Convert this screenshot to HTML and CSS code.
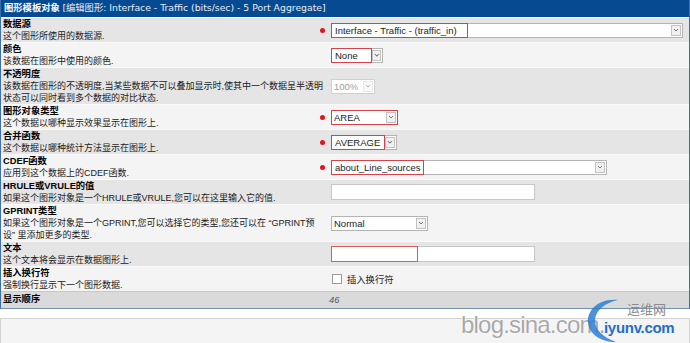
FILE: index.html
```html
<!DOCTYPE html>
<html lang="zh-CN">
<head>
<meta charset="utf-8">
<title>图形模板对象</title>
<link rel="stylesheet" href="styles.css">
</head>
<body>
<div class="panel">
  <div class="head"><b>图形模板对象</b> <span class="sub">[编辑图形: Interface - Traffic (bits/sec) - 5 Port Aggregate]</span></div>

  <div class="row gray">
    <div class="label"><div class="title">数据源</div><div class="desc">这个图形所使用的数据源.</div></div>
    <div class="field"><span class="dot"></span><span class="sel w-ds"><span class="val err w-ds-v">Interface - Traffic - (traffic_in)</span><span class="arrow"></span></span></div>
  </div>

  <div class="row light">
    <div class="label"><div class="title">颜色</div><div class="desc">该数据在图形中使用的颜色.</div></div>
    <div class="field"><span class="sel w-color"><span class="val err w-color-v">None</span><span class="arrow"></span></span></div>
  </div>

  <div class="row gray">
    <div class="label"><div class="title">不透明度</div><div class="desc">该数据在图形的不透明度,当某些数据不可以叠加显示时,使其中一个数据呈半透明<br>状态可以同时看到多个数据的对比状态.</div></div>
    <div class="field"><span class="sel w-op disabled"><span class="val">100%</span><span class="arrow"></span></span></div>
  </div>

  <div class="row light">
    <div class="label"><div class="title">图形对象类型</div><div class="desc">这个数据以哪种显示效果显示在图形上.</div></div>
    <div class="field"><span class="dot"></span><span class="sel w-area all-err"><span class="val">AREA</span><span class="arrow"></span></span></div>
  </div>

  <div class="row gray">
    <div class="label"><div class="title">合并函数</div><div class="desc">这个数据以哪种统计方法显示在图形上.</div></div>
    <div class="field"><span class="dot"></span><span class="sel w-avg"><span class="val err w-avg-v">AVERAGE</span><span class="arrow"></span></span></div>
  </div>

  <div class="row light">
    <div class="label"><div class="title">CDEF函数</div><div class="desc">应用到这个数据上的CDEF函数.</div></div>
    <div class="field"><span class="dot"></span><span class="sel w-cdef"><span class="val err w-cdef-v">about_Line_sources</span><span class="arrow"></span></span></div>
  </div>

  <div class="row gray">
    <div class="label"><div class="title">HRULE或VRULE的值</div><div class="desc">如果这个图形对象是一个HRULE或VRULE,您可以在这里输入它的值.</div></div>
    <div class="field"><span class="inp w-text"></span></div>
  </div>

  <div class="row light">
    <div class="label"><div class="title">GPRINT类型</div><div class="desc">如果这个图形对象是一个GPRINT,您可以选择它的类型,您还可以在 “GPRINT预<br>设” 里添加更多的类型.</div></div>
    <div class="field"><span class="sel w-gp"><span class="val">Normal</span><span class="arrow"></span></span></div>
  </div>

  <div class="row gray">
    <div class="label"><div class="title">文本</div><div class="desc">这个文本将会显示在数据图形上.</div></div>
    <div class="field"><span class="inp w-text"><span class="inp-err"></span></span></div>
  </div>

  <div class="row light">
    <div class="label"><div class="title">插入换行符</div><div class="desc">强制换行显示下一个图形数据.</div></div>
    <div class="field"><span class="check"></span><span class="check-label">插入换行符</span></div>
  </div>

  <div class="row order">
    <div class="label"><div class="title">显示顺序</div></div>
    <div class="field"><span class="num">46</span></div>
  </div>
</div>

<div class="footer"></div>

<div class="wm">
  <span class="wm-blog">blog.sina.com.</span>
  <svg class="wm-arc" width="40" height="46" viewBox="0 0 40 46"><path d="M32 3 C 13 1, 1 13, 2 25 C 3 37, 14 45, 30 45 C 17 40, 9 33, 9 24 C 9 14, 18 6, 32 3 Z" fill="#2a7fd4" opacity="0.85"/></svg>
  <span class="wm-cn">运维网</span>
  <span class="wm-en">iyunv.com</span>
</div>
</body>
</html>
```

FILE: styles.css
```css
* { box-sizing: border-box; }

body {
  margin: 0;
  width: 690px;
  height: 343px;
  overflow: hidden;
  background: #fff;
  font-family: "Liberation Sans", "Noto Sans CJK SC", sans-serif;
  font-size: 9.3px;
  color: #111;
  position: relative;
}

.panel {
  width: 690px;
  border-left: 1px solid #3e70a8;
  border-right: 1px solid #3e70a8;
  border-bottom: 1px solid #6f8fb4;
}

.head {
  background: #064b92;
  color: #fff;
  height: 17px;
  line-height: 16px;
  padding: 0 3px;
  white-space: nowrap;
}
.head b { font-weight: bold; }
.head .sub {
  font-family: "DejaVu Sans", "Noto Sans CJK SC", sans-serif;
  font-size: 9.3px;
  color: #e6ecf5;
}

.row {
  display: grid;
  grid-template-columns: 330px 1fr;
  border-top: 1px solid #fafafa;
}
.row.gray { background: #e5e5e5; }
.row.light { background: #f4f4f4; }
.row.order { background: #dadada; border-top: 1px solid #c8c8c8; height: 17px; }
.row.order .label { line-height: 15px; }

.label {
  padding: 0 0 0 2px;
  line-height: 12px;
  min-width: 0;
}
.title { font-weight: bold; color: #000; }
.desc { color: #1a1a1a; white-space: nowrap; font-size: 9px; }

.field {
  display: flex;
  align-items: center;
  padding-left: 0;
}

.dot {
  width: 5px;
  height: 5px;
  border-radius: 50%;
  background: #e4141b;
  margin-left: -11px;
  margin-right: 6px;
}

.sel {
  display: inline-flex;
  align-items: stretch;
  height: 15px;
  border: 1px solid #b4b4b4;
  background: #fff;
  color: #222;
  font-size: 9.5px;
}
.sel .val {
  line-height: 13px;
  padding: 0 2px;
  white-space: nowrap;
}
.sel .val.err {
  border: 1px solid #d6424a;
  margin: -1px 0 -1px -1px;
  line-height: 13px;
  padding-left: 3px;
}
.sel.all-err { border-color: #d6424a; }

.arrow {
  width: 10px;
  margin: 1px 1px 1px auto;
  border: 1px solid #c2c2c2;
  background: #f0f0f0 url("data:image/svg+xml;utf8,<svg xmlns='http://www.w3.org/2000/svg' width='8' height='8'><path d='M2 3 L4 5 L6 3' fill='none' stroke='%23777' stroke-width='1'/></svg>") center / 8px 8px no-repeat;
}

.sel.disabled { border-color: #d0d0d0; color: #a0a0a0; }
.sel.disabled .arrow { border-color: #dcdcdc; background-color: #f6f6f6; opacity: 0.6; }

.w-ds { width: 352px; }
.w-ds-v { width: 137px; }
.w-color { width: 52px; }
.w-color-v { width: 43px; }
.w-op { width: 44px; }
.w-area { width: 67px; }
.w-avg { width: 66px; }
.w-avg-v { width: 56px; }
.w-cdef { width: 276px; }
.w-cdef-v { width: 93px; }
.w-gp { width: 97px; }

.inp {
  display: inline-block;
  height: 16px;
  border: 1px solid #c6c6c6;
  background: #fff;
}
.w-text { width: 204px; }
.inp-err {
  display: block;
  width: 87px;
  height: 16px;
  margin: -1px 0 0 -1px;
  border: 1px solid #e05a5a;
}

.check {
  width: 10px;
  height: 10px;
  border: 1px solid #9a9a9a;
  background: #fff;
  margin-left: 1px;
}
.check-label { margin-left: 5px; color: #222; }

.num {
  font-style: italic;
  color: #555;
  line-height: 13px;
  margin-left: -2px;
}

.footer {
  margin-top: 9px;
  height: 26px;
  background: #f4f4f4;
  border: 1px solid #d2d2d2;
}

.wm { position: absolute; left: 0; top: 0; width: 690px; height: 343px; pointer-events: none; }
.wm-blog {
  position: absolute;
  left: 461px;
  top: 311px;
  font-family: "Liberation Sans", sans-serif;
  font-size: 24px;
  letter-spacing: -0.8px;
  color: rgba(140, 140, 140, 0.75);
  text-shadow: 0 0 2px #fff, 0 0 1px #fff;
  white-space: nowrap;
}
.wm-arc { position: absolute; left: 586px; top: 297px; }
.wm-cn {
  position: absolute;
  left: 627px;
  top: 299px;
  font-family: "Noto Sans CJK SC", sans-serif;
  font-size: 13px;
  color: #8a8a8a;
}
.wm-en {
  position: absolute;
  left: 604px;
  top: 319px;
  font-family: "Liberation Sans", sans-serif;
  font-weight: bold;
  font-size: 15px;
  color: #1f6fc8;
  letter-spacing: -0.3px;
}
```
